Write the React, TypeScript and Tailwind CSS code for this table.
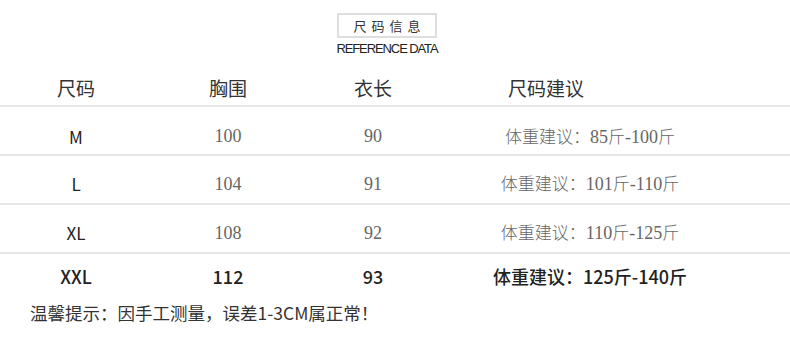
const sans = "font-['Noto_Sans_CJK_SC',sans-serif]"
const serif = "font-['Liberation_Serif','Noto_Sans_CJK_SC',serif]"

const rows = [
  { size: "M", chest: "100", length: "90", from: "85", to: "100" },
  { size: "L", chest: "104", length: "91", from: "101", to: "110" },
  { size: "XL", chest: "108", length: "92", from: "110", to: "125" },
]

export default function App() {
  return (
    <div className={`w-[790px] h-[337px] bg-white overflow-hidden ${sans}`}>
      {/* Title */}
      <div className="flex flex-col items-center pt-[13px] pr-[16px]">
        <div className="w-[100px] h-[25px] border-2 border-[#dedede] flex items-center justify-center text-[13px] text-[#333] tracking-[5px] pl-[5px] leading-none">
          尺码信息
        </div>
        <div className="mt-[4px] text-[13px] leading-[14px] text-[#222] tracking-[-1.1px] font-['Liberation_Sans',sans-serif]">
          REFERENCE DATA
        </div>
      </div>

      {/* Table */}
      <div className="mt-[16px]">
        <div className="grid grid-cols-[152px_152px_138px_1fr] h-[35px] items-center border-b-2 border-[#e6e6e6] text-[19px] text-[#333]">
          <div className="text-center">尺码</div>
          <div className="text-center">胸围</div>
          <div className="text-center">衣长</div>
          <div className="pl-[66px]">尺码建议</div>
        </div>

        {rows.map((r, i) => (
          <div
            key={r.size}
            className={`grid grid-cols-[152px_152px_138px_1fr] h-[49px] items-center border-b-2 border-[#e6e6e6] ${i === 0 ? "pt-[12px]" : "pt-[9px]"}`}
          >
            <div className="text-center text-[17px] text-[#222]">{r.size}</div>
            <div className={`text-center text-[18px] text-[#666] ${serif}`}>{r.chest}</div>
            <div className={`text-center text-[18px] text-[#666] ${serif}`}>{r.length}</div>
            <div className="w-[296px] text-center text-[17px] text-[#666]">
              <span className="font-light">体重建议：</span>
              <span className={`text-[18px] ${serif}`}>{r.from}</span>
              <span className="font-light">斤</span>
              <span className={`text-[18px] ${serif}`}>-{r.to}</span>
              <span className="font-light">斤</span>
            </div>
          </div>
        ))}

        <div className="grid grid-cols-[152px_152px_138px_1fr] h-[44px] items-center text-[#222] font-medium">
          <div className="text-center text-[18px]">XXL</div>
          <div className="text-center text-[18px]">112</div>
          <div className="text-center text-[18px]">93</div>
          <div className="w-[296px] text-center text-[18px]">体重建议：125斤-140斤</div>
        </div>
      </div>

      {/* Note */}
      <div className="pl-[30px] mt-[2px] text-[17.5px] text-[#333]">
        温馨提示：因手工测量，误差1-3CM属正常！
      </div>
    </div>
  )
}
